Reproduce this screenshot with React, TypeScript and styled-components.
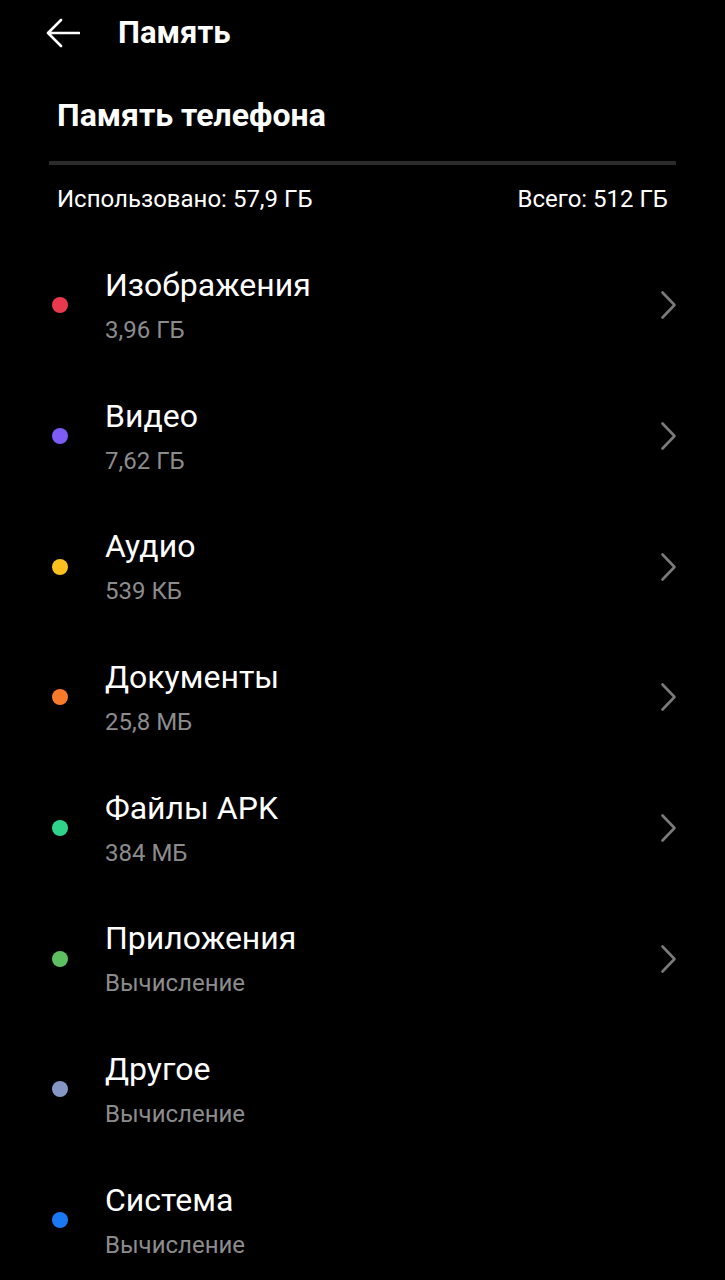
import React from "react";
import styled, { createGlobalStyle } from "styled-components";

const Global = createGlobalStyle`
  html, body { margin: 0; padding: 0; background: #000; }
  body { font-family: Roboto, "Noto Sans", sans-serif; color: #fff; }
`;

const Page = styled.div`
  width: 725px;
  min-height: 1280px;
  background: #000;
  display: flex;
  flex-direction: column;
`;

const TopBar = styled.header`
  height: 66px;
  display: flex;
  align-items: center;
  padding-left: 46px;
  gap: 38px;
`;

const BackButton = styled.button`
  width: 34px;
  height: 30px;
  padding: 0;
  border: none;
  background: none;
  display: flex;
  align-items: center;
  justify-content: center;
`;

const TopTitle = styled.h1`
  margin: 0;
  font-size: 31px;
  font-weight: 700;
  line-height: 38px;
  color: #fff;
`;

const Section = styled.section`
  padding: 0 49px;
`;

const SectionTitle = styled.h2`
  margin: 0;
  padding: 30px 0 0 8px;
  height: 66px;
  box-sizing: border-box;
  font-size: 32px;
  font-weight: 700;
  line-height: 38px;
`;

const Bar = styled.div`
  height: 4px;
  background: #2a2a2a;
  margin-top: 29px;
`;

const Summary = styled.div`
  display: flex;
  justify-content: space-between;
  padding: 0 8px;
  margin-top: 20px;
  font-size: 24px;
  line-height: 28px;
  color: #fff;
`;

const List = styled.ul`
  list-style: none;
  margin: 27px 0 0;
  padding: 0;
`;

const Row = styled.li`
  height: 130.7px;
  display: flex;
  align-items: center;
  padding: 0 48px 0 52px;
`;

const Dot = styled.span<{ $color: string }>`
  width: 16px;
  height: 16px;
  border-radius: 50%;
  background: ${(p) => p.$color};
  flex: none;
`;

const Texts = styled.div`
  flex: 1;
  display: flex;
  flex-direction: column;
  margin-left: 37px;
  gap: 11px;
`;

const Name = styled.div`
  font-size: 32px;
  line-height: 38px;
  color: #fff;
`;

const Size = styled.div`
  font-size: 24px;
  line-height: 30px;
  color: #8c8c8c;
`;

const Chevron = () => (
  <svg width="18" height="30" viewBox="0 0 18 30" fill="none">
    <path d="M3.5 2.5 L15.5 15 L3.5 27.5" stroke="#7a7a7a" strokeWidth="2.6" strokeLinecap="round" strokeLinejoin="round" />
  </svg>
);

const items = [
  { name: "Изображения", size: "3,96 ГБ", color: "#e83a4c", arrow: true },
  { name: "Видео", size: "7,62 ГБ", color: "#7d5cf5", arrow: true },
  { name: "Аудио", size: "539 КБ", color: "#fbbf1f", arrow: true },
  { name: "Документы", size: "25,8 МБ", color: "#f97a2a", arrow: true },
  { name: "Файлы APK", size: "384 МБ", color: "#2fd389", arrow: true },
  { name: "Приложения", size: "Вычисление", color: "#5cc060", arrow: true },
  { name: "Другое", size: "Вычисление", color: "#8595c4", arrow: false },
  { name: "Система", size: "Вычисление", color: "#1a78f5", arrow: false },
];

export default function App() {
  return (
    <Page>
      <Global />
      <TopBar>
        <BackButton aria-label="Назад">
          <svg width="34" height="30" viewBox="0 0 34 30" fill="none">
            <path d="M2 15 H33 M15 2 L2 15 L15 28" stroke="#fff" strokeWidth="2.6" strokeLinecap="round" strokeLinejoin="round" />
          </svg>
        </BackButton>
        <TopTitle>Память</TopTitle>
      </TopBar>
      <Section>
        <SectionTitle>Память телефона</SectionTitle>
        <Bar />
        <Summary>
          <span>Использовано: 57,9 ГБ</span>
          <span>Всего: 512 ГБ</span>
        </Summary>
      </Section>
      <List>
        {items.map((it) => (
          <Row key={it.name}>
            <Dot $color={it.color} />
            <Texts>
              <Name>{it.name}</Name>
              <Size>{it.size}</Size>
            </Texts>
            {it.arrow && <Chevron />}
          </Row>
        ))}
      </List>
    </Page>
  );
}
